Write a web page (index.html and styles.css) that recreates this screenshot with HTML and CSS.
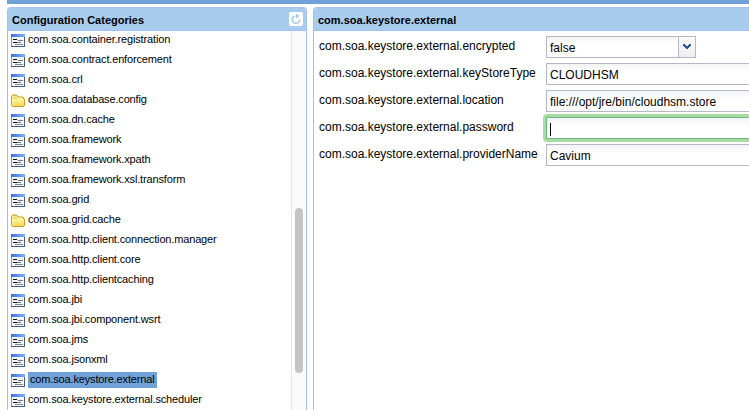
FILE: index.html
```html
<!DOCTYPE html>
<html lang="en">
<head>
<meta charset="utf-8">
<title>Configuration Categories</title>
<link rel="stylesheet" href="styles.css">
</head>
<body>
<svg width="0" height="0" class="defs" aria-hidden="true">
  <defs>
    <linearGradient id="bar" x1="0" y1="0" x2="1" y2="0"><stop offset="0" stop-color="#3c70e4"/><stop offset="1" stop-color="#83b2ff"/></linearGradient>
    <linearGradient id="gold" x1="0" y1="0" x2="0" y2="1"><stop offset="0" stop-color="#fff5a8"/><stop offset="1" stop-color="#f8d650"/></linearGradient>
    <symbol id="page" viewBox="0 0 14 13">
      <rect width="14" height="13" fill="#7d9bd0"/>
      <rect x="1" y="3" width="12" height="9" fill="#f3f6fc"/>
      <rect width="14" height="3" fill="url(#bar)"/>
      <path d="M13.500 3v9.500H0" fill="none" stroke="#3f5c88"/>
      <path d="M2 5.500h4M2 8.500h4" stroke="#111"/>
      <path d="M7 6.500h5" stroke="#777"/>
      <path d="M6 8.500h4" stroke="#777"/>
      <path d="M4 10.500h8" stroke="#888"/>
    </symbol>
    <symbol id="folder" viewBox="0 0 14 13">
      <path d="M.5 11V2.500L1.500 1h4L7 3h5l.5 1v1h1v6l-1 1.500h-11z" fill="#f8dc67" stroke="#c49a2a"/>
      <path d="M2 5h11v6l-1 1H2z" fill="url(#gold)"/>
      <path d="M1.500 11V3M2 2.500h3.500L6.500 4h5" fill="none" stroke="#fff3a6"/>
    </symbol>
  </defs>
</svg>
<div class="topbar"></div>
<main class="workspace">
  <section class="panel categories">
    <header class="panel-head"><span>Configuration Categories</span>
      <button class="refresh" aria-label="Refresh"><svg width="14" height="14" viewBox="0 0 14 14"><path d="M5.500 4.200A3.700 3.700 0 1 0 10.700 7.500M6.500 4.200H9" fill="none" stroke="#a9cbed" stroke-width="1.500"/><path d="M7 1.500v5L10.500 4z" fill="#a9cbed"/></svg></button>
    </header>
    <div class="panel-body">
      <ul class="tree">
        <li><svg class="icon"><use href="#page"/></svg><span>com.soa.container.registration</span></li>
        <li><svg class="icon"><use href="#page"/></svg><span>com.soa.contract.enforcement</span></li>
        <li><svg class="icon"><use href="#page"/></svg><span>com.soa.crl</span></li>
        <li><svg class="icon"><use href="#folder"/></svg><span>com.soa.database.config</span></li>
        <li><svg class="icon"><use href="#page"/></svg><span>com.soa.dn.cache</span></li>
        <li><svg class="icon"><use href="#page"/></svg><span>com.soa.framework</span></li>
        <li><svg class="icon"><use href="#page"/></svg><span>com.soa.framework.xpath</span></li>
        <li><svg class="icon"><use href="#page"/></svg><span>com.soa.framework.xsl.transform</span></li>
        <li><svg class="icon"><use href="#page"/></svg><span>com.soa.grid</span></li>
        <li><svg class="icon"><use href="#folder"/></svg><span>com.soa.grid.cache</span></li>
        <li><svg class="icon"><use href="#page"/></svg><span>com.soa.http.client.connection.manager</span></li>
        <li><svg class="icon"><use href="#page"/></svg><span>com.soa.http.client.core</span></li>
        <li><svg class="icon"><use href="#page"/></svg><span>com.soa.http.clientcaching</span></li>
        <li><svg class="icon"><use href="#page"/></svg><span>com.soa.jbi</span></li>
        <li><svg class="icon"><use href="#page"/></svg><span>com.soa.jbi.component.wsrt</span></li>
        <li><svg class="icon"><use href="#page"/></svg><span>com.soa.jms</span></li>
        <li><svg class="icon"><use href="#page"/></svg><span>com.soa.jsonxml</span></li>
        <li><svg class="icon"><use href="#page"/></svg><span class="selected">com.soa.keystore.external</span></li>
        <li><svg class="icon"><use href="#page"/></svg><span>com.soa.keystore.external.scheduler</span></li>
      </ul>
      <div class="scroll-track"><div class="scroll-thumb"></div></div>
    </div>
  </section>
  <section class="panel details">
    <header class="panel-head"><span>com.soa.keystore.external</span></header>
    <div class="form">
      <div class="row"><span class="label">com.soa.keystore.external.encrypted</span><div class="field select"><span>false</span><span class="arrow"><svg width="10" height="6" viewBox="0 0 10 6"><path d="M1 0h2v1h1v1h2V1h1V0h2v2H8v1H7v1H6v1H4V4H3V3H2V2H1z" fill="#2f559f"/></svg></span></div></div>
      <div class="row"><span class="label">com.soa.keystore.external.keyStoreType</span><div class="field"><span>CLOUDHSM</span></div></div>
      <div class="row"><span class="label">com.soa.keystore.external.location</span><div class="field"><span>file:///opt/jre/bin/cloudhsm.store</span></div></div>
      <div class="row"><span class="label">com.soa.keystore.external.password</span><div class="field focused"><i class="caret"></i></div></div>
      <div class="row"><span class="label">com.soa.keystore.external.providerName</span><div class="field"><span>Cavium</span></div></div>
    </div>
  </section>
</main>
</body>
</html>
```
FILE: styles.css
```css
* { box-sizing: border-box; }
body {
  margin: 0;
  height: 410px;
  overflow: hidden;
  background: #fff;
  color: #000;
  font-family: "Liberation Sans", Arial, sans-serif;
}
.defs { display: block; }
.topbar { height: 4px; margin-left: 7px; background: #70a2d9; }
.workspace {
  display: grid;
  grid-template-columns: 300px 1fr;
  grid-template-rows: 403px;
  column-gap: 6px;
  height: 406px;
  padding: 3px 0 0 7px;
}
.panel {
  min-width: 0;
  border: 1px solid #a2c0f0;
  border-bottom: 0;
  border-radius: 4px 4px 0 0;
  overflow: hidden;
}
.details { border-right: 0; border-top-right-radius: 0; }
.panel-head {
  display: flex;
  align-items: center;
  justify-content: space-between;
  height: 23px;
  padding: 2px 3px 0 4px;
  border-bottom: 1px solid #a2c0f0;
  background: #a8ccee;
  font-size: 11px;
  font-weight: bold;
  white-space: nowrap;
}
.refresh {
  display: block;
  width: 14px;
  height: 14px;
  margin-top: -2px;
  padding: 0;
  border: 0;
  border-radius: 2px;
  background: #fff;
}
.refresh svg { display: block; }
.panel-body { display: flex; justify-content: space-between; height: 379px; }
.tree {
  flex: 1;
  margin: -1px 0 0;
  padding: 0 0 0 3px;
  list-style: none;
  font-size: 11px;
  letter-spacing: -0.155px;
}
.tree li { display: flex; align-items: center; gap: 3px; height: 20px; white-space: nowrap; }
.tree span { padding-bottom: 2px; line-height: 14px; }
.icon { flex: none; width: 14px; height: 13px; margin-top: 1px; }
.tree .selected { padding: 0 2px 2px; background: #70a2d9; }
.scroll-track {
  width: 15px;
  padding: 177px 3px 0;
  border-left: 1px solid #e8e8e8;
  background: #fafafa;
}
.scroll-thumb { width: 8px; height: 165px; border-radius: 4px; background: #c4c4c4; }
.form { display: grid; row-gap: 5px; padding: 5px 0 0 5px; }
.row { display: grid; grid-template-columns: 227px 1fr; height: 22px; }
.label { font-size: 12px; line-height: 20px; white-space: nowrap; }
.field {
  display: flex;
  align-items: center;
  height: 22px;
  padding: 2px 0 0 3px;
  border: 1px solid #b5b8c8;
  border-right: 0;
  background: linear-gradient(#f4f4f4, #fff 8px);
  font-size: 12px;
  white-space: nowrap;
}
.select { width: 150px; justify-content: space-between; border-right: 1px solid #b5b8c8; }
.arrow {
  display: flex;
  align-items: center;
  justify-content: center;
  width: 17px;
  height: 20px;
  margin-top: -2px;
  padding-bottom: 1px;
  border-left: 1px solid #b5b8c8;
  background: linear-gradient(#fafafa, #eee);
}
.focused { border-color: #65b586; outline: 3px solid #aadb9f; border-radius: 1px; }
.caret { width: 1px; height: 13px; background: #000; }
```
